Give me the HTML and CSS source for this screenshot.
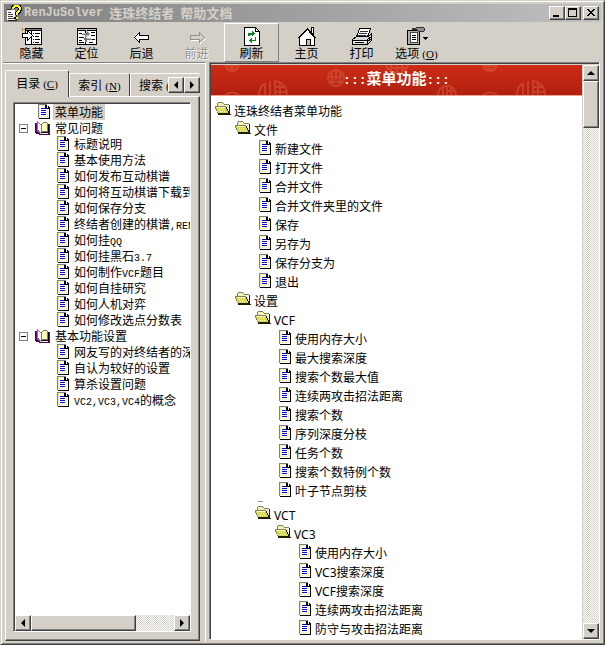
FILE: index.html
```html
<!DOCTYPE html>
<html lang="zh-CN">
<head>
<meta charset="utf-8">
<title>RenJuSolver 连珠终结者 帮助文档</title>
<link rel="stylesheet" href="styles.css">
</head>
<body>
<svg class="defs" aria-hidden="true">
  <symbol id="doc" viewBox="0 0 12 15">
    <path d="M0 0h8l4 4v11H0z" fill="#fff"/>
    <path d="M1 1h1v12H1zM1 1h7v1H1zM1 12h9v1H1zM9 4h1v9H9z" fill="#f0f0b0"/>
    <path d="M0 0h9v1H0zM0 0h1v14H0z" fill="#808080"/>
    <path d="M8 1h1v3h2v1H7V1zM10 2h1v1h1v12H1v-1h10V4h-1z" fill="#000"/>
    <path d="M3 4h4v1H3zM3 6h5v1H3zM3 8h5v1H3zM3 10h5v1H3z" fill="#0000e0"/>
  </symbol>
  <symbol id="book" viewBox="0 0 16 14">
    <path d="M0 2h1v9l4 2h9V3h1v11H5l-5-2z" fill="#400040"/>
    <path d="M1 2l2 1v8l3 2h7v-1h1V3h1v10H5l-4-2z" fill="#800080"/>
    <path d="M2 0l4 4v8L2 9z" fill="#fff" stroke="#808080"/>
    <path d="M6 4l3-3 3 1v9l-3-1-3 2z" fill="#ffffc0" stroke="#808060"/>
    <path d="M13 3h1v9H7v-1h6z" fill="#000"/>
  </symbol>
  <symbol id="folder" viewBox="0 0 16 13">
    <path d="M2 1h1V0h5v1h1v1h4v9H3z" fill="#f2f2b8"/>
    <path d="M3 0h5v1H3zM2 1h1v3H2zM8 1h1v1H8zM9 2h5v1H9zM0 4h11v1H0zM0 5h1v2H0zM1 7h1v2H1zM2 9h1v2H2z" fill="#808060"/>
    <path d="M1 5h10l3 6H3z" fill="#d8d850"/>
    <path d="M2 5h8v1H2zM4 7h1v1H4zM6 7h1v1H6zM8 7h1v1H8zM5 9h1v1H5zM7 9h1v1H7zM9 9h1v1H9z" fill="#ffffc0"/>
    <path d="M14 3h1v9h1v1H3v-2h11zM11 5h1v2h1v2h1v2h-1V9h-1V7h-1z" fill="#202000"/>
  </symbol>
</svg>
<div class="window">
  <header class="titlebar">
    <svg class="appicon" viewBox="0 0 16 16" aria-hidden="true">
      <path d="M1 5h8v10H1z" fill="#fff"/><path d="M1 4h4v1H1zM2 15h9v1H2zM10 10h1v5h-1z" fill="#222"/>
      <path d="M2 7h3v1H2zM2 9h5v1H2zM2 11h5v1H2zM2 13h6v1H2z" fill="#444"/>
      <path d="M7 4q0-3 3.500-3t3.500 3q0 2-3 4v2M10 12v2" fill="none" stroke="#000" stroke-width="4"/>
      <path d="M7 4q0-3 3.500-3t3.500 3q0 2-3 4v2M11 12v2" fill="none" stroke="#ffff20" stroke-width="2"/>
    </svg>
    <h1><span class="mono">RenJuSolver</span> <span>连珠终结者</span> <span>帮助文档</span></h1>
    <div class="winbtns">
      <button class="raised" aria-label="最小化"><svg viewBox="0 0 12 10"><path d="M2 7h6v2H2z"/></svg></button>
      <button class="raised" aria-label="最大化"><svg viewBox="0 0 12 10"><path d="M1 0h9v9H1zM2 2v6h7V2z" fill-rule="evenodd"/></svg></button>
      <button class="raised close" aria-label="关闭"><svg viewBox="0 0 12 10"><path d="M2 1h2v1h1v1h2V2h1V1h2v1H9v1H8v1H7v1h1v1h1v1h1v1H8V7H7V6H5v1H4v1H2V7h1V6h1V5h1V4H4V3H3V2H2z"/></svg></button>
    </div>
  </header>
  <nav class="toolbar">
    <button><svg viewBox="0 0 22 19"><path d="M4 1h17v17H4z" fill="#000"/><path d="M5 4h5v13H5zM11 4h9v13h-9z" fill="#fff"/><path d="M5 2h15v1H5z" fill="#808080"/><path d="M12 6h1v1h-1zM14 6h5v1h-5zM12 9h1v1h-1zM14 9h4v1h-4zM12 12h1v1h-1zM14 12h5v1h-5zM12 15h1v1h-1zM14 15h4v1h-4z"/><path d="M1.500 6.500h5v-3l5 5-5 5v-3h-5z" fill="#fff" stroke="#000"/><path d="M1 1h1v3H1zM3 2h1v1H3z" fill="#a08040"/></svg><span>隐藏</span></button>
    <button><svg viewBox="0 0 22 19"><path d="M1 1h20v17H1z"/><path d="M2 4h7v13H2zM10 4h10v13H10z" fill="#fff"/><path d="M2 2h18v1H2z" fill="#c0c0c0"/><path d="M3 6h3v1H3zM3 10h5v1H3zM3 13h3v1H3zM3 15h5v1H3zM15 5h4v1h-4zM15 8h4v1h-4zM13 12h6v1h-6zM13 15h4v1h-4z" fill="#000"/><path d="M5 8h5v3l4-4-4-4v3H7zM15 11h-4V8l-4 4 4 4v-3h4z" fill="#707878" stroke="#fff" stroke-width=".5"/></svg><span>定位</span></button>
    <button><svg viewBox="0 0 22 19"><path d="M3.500 10.500l5-5v3h9v4h-9v3z" fill="#fff" stroke="#000"/></svg><span>后退</span></button>
    <button disabled><svg viewBox="0 0 22 19"><path d="M18.500 10.500l-5-5v3h-9v4h9v3z" fill="none" stroke="#fff" transform="translate(1 1)"/><path d="M18.500 10.500l-5-5v3h-9v4h9v3z" fill="#d4d0c8" stroke="#909090"/></svg><span>前进</span></button>
    <button class="hot"><svg viewBox="0 0 22 19"><path d="M3.500.5h11l4 4v14h-15z" fill="#fff" stroke="#000"/><path d="M14.500 1v3.500h4" fill="none" stroke="#000"/><path d="M7 9V6h4V4l3 2.500L11 9V7.500H8.500V9zM15 10v4h-4v2l-3-2.500 3-2.500v1.500h2.500V10z" fill="#108020"/></svg><span>刷新</span></button>
    <button><svg viewBox="0 0 22 19"><path d="M3.500 18.500v-8l8-8 7 8v8z" fill="#fff" stroke="#000"/><path d="M1.500 11.500l10-10 9 10" fill="none" stroke="#000"/><path d="M15.500 5V0.500h2V7" fill="#fff" stroke="#000"/><path d="M10.500 12.500h4v6h-4z" fill="#c0c0c0" stroke="#000"/></svg><span>主页</span></button>
    <button><svg viewBox="0 0 22 19"><path d="M5.500 10l3-8.500h11l-3 8.500z" fill="#fff" stroke="#000"/><path d="M9 4h8M8 6h8M7 8h8" stroke="#333"/><path d="M1.500 12.500l4-3h12l3-3v7l-4 4h-15z" fill="#d8d8d8" stroke="#000"/><path d="M1 13h15v5M4 15h9M16 13l5-4M16 15l5-4" fill="none" stroke="#000"/><path d="M2 14h13v1H2z" fill="#fff"/></svg><span>打印</span></button>
    <button><svg viewBox="0 0 22 19"><path d="M1.500 3.500h12v14h-12z" fill="#b0b0a8" stroke="#000"/><path d="M4.500 5.500h7v10h-7z" fill="#fff" stroke="#444"/><path d="M6 8h4M6 10h4M6 12h4" stroke="#000"/><path d="M6 2l8-2 4 1v3l-5 1-2-2z" fill="#909090" stroke="#333"/><path d="M17 10h5l-2.500 3z"/></svg><span>选项<span class="key">(<u>O</u>)</span></span></button>
  </nav>
  <main class="main">
    <aside class="side">
      <div class="tabs">
        <button class="tab active">目录<span class="key">(<u>C</u>)</span></button>
        <button class="tab">索引<span class="key">(<u>N</u>)</span></button>
        <button class="tab last">搜索<span class="key">(<u>S</u>)</span></button>
        <div class="tabarrows"><button class="raised" aria-label="向左"><i class="arrow left"></i></button><button class="raised" aria-label="向右"><i class="arrow right"></i></button></div>
      </div>
      <div class="page">
        <div class="treebox">
          <ul class="tree">
            <li class="top"><svg class="doc"><use href="#doc"/></svg><span class="selected">菜单功能</span></li>
            <li class="group"><button class="toggle" aria-label="折叠"></button><svg class="book"><use href="#book"/></svg><span>常见问题</span></li>
            <li><svg class="doc"><use href="#doc"/></svg><span>标题说明</span></li>
            <li><svg class="doc"><use href="#doc"/></svg><span>基本使用方法</span></li>
            <li><svg class="doc"><use href="#doc"/></svg><span>如何发布互动棋谱</span></li>
            <li><svg class="doc"><use href="#doc"/></svg><span>如何将互动棋谱下载到</span></li>
            <li><svg class="doc"><use href="#doc"/></svg><span>如何保存分支</span></li>
            <li><svg class="doc"><use href="#doc"/></svg><span>终结者创建的棋谱<b>,REN</b></span></li>
            <li><svg class="doc"><use href="#doc"/></svg><span>如何挂<b>QQ</b></span></li>
            <li><svg class="doc"><use href="#doc"/></svg><span>如何挂黑石<b>3.7</b></span></li>
            <li><svg class="doc"><use href="#doc"/></svg><span>如何制作<b>VCF</b>题目</span></li>
            <li><svg class="doc"><use href="#doc"/></svg><span>如何自挂研究</span></li>
            <li><svg class="doc"><use href="#doc"/></svg><span>如何人机对弈</span></li>
            <li><svg class="doc"><use href="#doc"/></svg><span>如何修改选点分数表</span></li>
            <li class="group"><button class="toggle" aria-label="折叠"></button><svg class="book"><use href="#book"/></svg><span>基本功能设置</span></li>
            <li><svg class="doc"><use href="#doc"/></svg><span>网友写的对终结者的深</span></li>
            <li><svg class="doc"><use href="#doc"/></svg><span>自认为较好的设置</span></li>
            <li><svg class="doc"><use href="#doc"/></svg><span>算杀设置问题</span></li>
            <li><svg class="doc"><use href="#doc"/></svg><span><b>VC2,VC3,VC4</b>的概念</span></li>
          </ul>
          <div class="hscroll"><button class="raised" aria-label="向左滚动"><i class="arrow left"></i></button><div class="raised thumb"></div><button class="raised end" aria-label="向右滚动"><i class="arrow right"></i></button></div>
        </div>
      </div>
    </aside>
    <section class="content">
      <div class="document">
        <div class="banner">
          <svg class="seals" aria-hidden="true">
            <defs><pattern id="seals" width="258" height="30" patternUnits="userSpaceOnUse">
              <g fill="none" stroke="#e06a50" stroke-width="2">
                <circle cx="21" cy="-1" r="7"/><path d="M15 1h12M21 0v6M17 4h8"/>
                <path d="M14 30q7-5 14 0"/>
                <path d="M48 30q0-8 6-12M54 30V18M59 30V16M64 30V15M64 16q12 2 12 14M64 22h10M64 27h12M69 17v13"/>
                <circle cx="125" cy="13" r="8"/><path d="M121 7v13M125 6v9M129 7v12M118 12h13M119 17h12"/>
                <path d="M175 0q2 8 11 8t11-8M180 0v6M186 0v8M191 0v6M177 3h18"/>
                <path d="M227 30q1-9 9-9t9 9M232 30v-7M236 30v-8M240 30v-7M236 26h8"/>
              </g>
            </pattern></defs>
            <rect width="100%" height="100%" fill="url(#seals)"/>
          </svg>
          <h2><span>:::</span>菜单功能<span>:::</span></h2>
        </div>
        <ul class="outline">
          <li class="row"><svg class="folder"><use href="#folder"/></svg>连珠终结者菜单功能</li>
          <li><ul>
            <li class="row"><svg class="folder"><use href="#folder"/></svg>文件</li>
            <li><ul>
              <li class="row"><svg class="doc"><use href="#doc"/></svg>新建文件</li>
              <li class="row"><svg class="doc"><use href="#doc"/></svg>打开文件</li>
              <li class="row"><svg class="doc"><use href="#doc"/></svg>合并文件</li>
              <li class="row"><svg class="doc"><use href="#doc"/></svg>合并文件夹里的文件</li>
              <li class="row"><svg class="doc"><use href="#doc"/></svg>保存</li>
              <li class="row"><svg class="doc"><use href="#doc"/></svg>另存为</li>
              <li class="row"><svg class="doc"><use href="#doc"/></svg>保存分支为</li>
              <li class="row"><svg class="doc"><use href="#doc"/></svg>退出</li>
            </ul></li>
            <li class="row"><svg class="folder"><use href="#folder"/></svg>设置</li>
            <li><ul>
              <li class="row"><svg class="folder"><use href="#folder"/></svg>VCF</li>
              <li><ul>
                <li class="row"><svg class="doc"><use href="#doc"/></svg>使用内存大小</li>
                <li class="row"><svg class="doc"><use href="#doc"/></svg>最大搜索深度</li>
                <li class="row"><svg class="doc"><use href="#doc"/></svg>搜索个数最大值</li>
                <li class="row"><svg class="doc"><use href="#doc"/></svg>连续两攻击招法距离</li>
                <li class="row"><svg class="doc"><use href="#doc"/></svg>搜索个数</li>
                <li class="row"><svg class="doc"><use href="#doc"/></svg>序列深度分枝</li>
                <li class="row"><svg class="doc"><use href="#doc"/></svg>任务个数</li>
                <li class="row"><svg class="doc"><use href="#doc"/></svg>搜索个数特例个数</li>
                <li class="row"><svg class="doc"><use href="#doc"/></svg>叶子节点剪枝</li>
              </ul></li>
              <li class="dash"></li>
              <li class="row"><svg class="folder"><use href="#folder"/></svg>VCT</li>
              <li><ul>
                <li class="row"><svg class="folder"><use href="#folder"/></svg>VC3</li>
                <li><ul>
                  <li class="row"><svg class="doc"><use href="#doc"/></svg>使用内存大小</li>
                  <li class="row"><svg class="doc"><use href="#doc"/></svg>VC3搜索深度</li>
                  <li class="row"><svg class="doc"><use href="#doc"/></svg>VCF搜索深度</li>
                  <li class="row"><svg class="doc"><use href="#doc"/></svg>连续两攻击招法距离</li>
                  <li class="row"><svg class="doc"><use href="#doc"/></svg>防守与攻击招法距离</li>
                  <li class="row"><svg class="doc"><use href="#doc"/></svg></li>
                </ul></li>
              </ul></li>
            </ul></li>
          </ul></li>
        </ul>
      </div>
      <div class="vscroll"><button class="raised" aria-label="向上滚动"><i class="arrow up"></i></button><div class="raised thumb"></div><button class="raised end" aria-label="向下滚动"><i class="arrow down"></i></button></div>
    </section>
  </main>
</div>
</body>
</html>
```
FILE: styles.css
```css
* { box-sizing: border-box; }
body {
  margin: 0;
  font: 12px/16px "Noto Sans CJK SC", sans-serif;
  color: #000;
  background: #d4d0c8;
}
button { font: inherit; color: inherit; padding: 0; margin: 0; border: 0; background: none; }
ul { list-style: none; margin: 0; padding: 0; }
svg { display: block; flex: none; shape-rendering: crispEdges; }
.defs { position: absolute; width: 0; height: 0; }

.window {
  display: flex;
  flex-direction: column;
  height: 100vh;
  padding: 2px;
  border: 1px solid;
  border-color: #d4d0c8 #404040 #404040 #d4d0c8;
  box-shadow: inset 1px 1px #fff, inset -1px -1px #808080;
}
.raised {
  display: flex;
  align-items: center;
  justify-content: center;
  flex: none;
  width: 16px;
  height: 16px;
  background: #d4d0c8;
  border: 1px solid;
  border-color: #fff #404040 #404040 #fff;
  box-shadow: inset -1px -1px #808080;
}

.titlebar {
  display: flex;
  align-items: center;
  flex: none;
  height: 18px;
  margin: 1px 1px 0;
  padding: 0 2px;
  background: linear-gradient(90deg, #808080, #c0c0c0);
  color: #d4d0c8;
}
.appicon { width: 16px; height: 16px; }
h1 {
  display: flex;
  flex: 1;
  gap: 6px;
  margin: 0 0 0 2px;
  font-size: 13px;
  line-height: 18px;
  font-weight: bold;
  white-space: nowrap;
}
h1 .mono { font-family: "Liberation Mono", monospace; font-size: 12px; }
.winbtns { display: flex; color: #000; }
.winbtns .raised { height: 14px; }
.winbtns svg { width: 12px; height: 10px; }
.winbtns .close { margin-left: 2px; }

.toolbar {
  display: flex;
  flex: none;
  height: 40px;
  padding: 1px 0 0 1px;
}
.toolbar button {
  display: flex;
  flex-direction: column;
  align-items: center;
  width: 55px;
  padding-top: 3px;
  border: 1px solid transparent;
  line-height: 14px;
  white-space: nowrap;
}
.toolbar svg { width: 22px; height: 19px; }
.toolbar .hot { border-color: #fff #808080 #808080 #fff; }
.toolbar button:disabled { color: #909090; text-shadow: 1px 1px #fff; }
.key { font-family: "Liberation Serif", serif; font-size: 11px; margin-left: 3px; }

.main { display: flex; flex: 1; min-height: 0; }
.side {
  display: flex;
  flex-direction: column;
  flex: none;
  width: 203px;
  padding: 7px 5px 1px 2px;
  border-top: 1px solid #808080;
  border-right: 1px solid #fff;
  box-shadow: inset 0 1px #fff;
}
.tabs { position: relative; display: flex; align-items: flex-end; height: 26px; }
.tab {
  height: 23px;
  width: 61px;
  flex: none;
  border: 1px solid;
  border-color: #fff #404040 transparent #fff;
  border-bottom: 0;
  border-radius: 2px 2px 0 0;
  white-space: nowrap;
}
.tab.active { width: 64px; height: 27px; margin-bottom: -1px; background: #d4d0c8; position: relative; padding-bottom: 2px; }
.tab.last { flex: 1; min-width: 0; overflow: hidden; padding-left: 8px; text-align: left; border-right: 0; }
.tabarrows { position: absolute; right: 0; bottom: 3px; display: flex; }
.page {
  flex: 1;
  min-height: 0;
  display: flex;
  padding: 5px 8px 8px 7px;
  border: 1px solid;
  border-color: #fff #404040 #404040 #fff;
  box-shadow: inset -1px -1px #808080;
}
.treebox {
  display: flex;
  flex-direction: column;
  flex: 1;
  min-width: 0;
  background: #fff;
  border: 1px solid;
  border-color: #808080 #fff #fff #808080;
  box-shadow: inset 1px 1px #404040;
  padding: 1px 0 0 1px;
}
.tree { flex: 1; min-height: 0; overflow: hidden; }
.tree li { display: flex; align-items: flex-start; height: 16px; padding-left: 42px; white-space: nowrap; }
.tree .top { padding-left: 23px; }
.tree .group { padding-left: 4px; }
.doc { width: 12px; height: 15px; }
.tree .doc { margin-right: 3px; }
.book { width: 16px; height: 14px; margin: 1px 2px 0 7px; }
.tree span { padding: 0 2px; }
.selected { background: #d4d0c8; }
.tree b { font: 10px/14px "Liberation Mono", monospace; }
.toggle { width: 9px; height: 9px; margin-top: 4px; border: 1px solid #808080; background: linear-gradient(#000, #000) center / 5px 1px no-repeat; }

.hscroll, .vscroll {
  display: flex;
  flex: none;
  background: repeating-conic-gradient(#fff 0 25%, #d4d0c8 0 50%) 0 0 / 2px 2px;
}
.hscroll .thumb { width: 105px; }
.end { margin-left: auto; }
.arrow { border: 4px solid transparent; }
.left { border-right-color: #000; border-left-width: 0; }
.right { border-left-color: #000; border-right-width: 0; }
.up { border-bottom-color: #000; border-top-width: 0; }
.down { border-top-color: #000; border-bottom-width: 0; }

.content {
  display: flex;
  flex: 1;
  min-width: 0;
  margin: 0 2px 2px 3px;
  border: 1px solid;
  border-color: #808080 #fff #fff #808080;
  box-shadow: inset 1px 1px #404040;
  padding: 2px 0 0 1px;
  background: #d4d0c8;
}
.document { flex: 1; min-width: 0; background: #fff; overflow: hidden; }
.vscroll { flex-direction: column; margin-left: 1px; }
.vscroll .thumb { height: 47px; }
.vscroll .end { margin: auto 0 0; }
.banner {
  display: grid;
  height: 31px;
  background: linear-gradient(#cc2c14, #b02010);
  border-bottom: 1px solid #f0a090;
}
.banner > * { grid-area: 1 / 1; }
.seals { width: 100%; height: 30px; opacity: .4; shape-rendering: auto; }
h2 {
  margin: 0;
  color: #fff;
  font-size: 15px;
  line-height: 26px;
  text-align: center;
}
h2 span { font-family: "Liberation Mono", monospace; font-size: 13px; }

.outline { padding: 6px 0 0 4px; font-family: "Noto Sans", "Noto Sans CJK SC", sans-serif; line-height: 19px; white-space: nowrap; }
.outline ul { padding-left: 20px; }
.row { display: flex; align-items: flex-start; height: 19px; }
.outline .folder { width: 16px; height: 13px; margin-right: 3px; }
.outline .doc { margin: 0 4px; }
.outline .dash { width: 5px; height: 1px; margin: 0 0 4px 3px; background: #909090; }
```
